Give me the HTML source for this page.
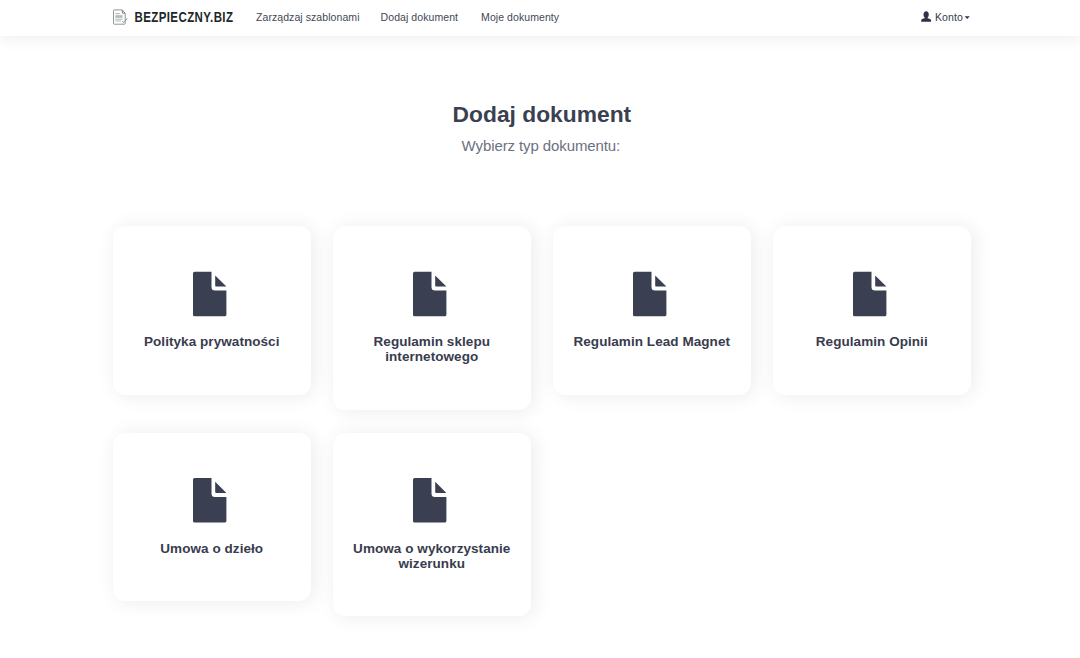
<!DOCTYPE html>
<html><head><meta charset="utf-8">
<style>
*{margin:0;padding:0;box-sizing:border-box}
html,body{width:1080px;height:658px;overflow:hidden;background:#fff;font-family:"Liberation Sans",sans-serif}
.nav{position:absolute;left:0;top:0;width:1080px;height:36px;background:#fff;box-shadow:0 2px 16px rgba(0,0,0,0.08);z-index:2}
.logo-ic{position:absolute;left:108px;top:5px}
.logo-t{position:absolute;left:134.5px;top:6px;font-weight:bold;font-size:11.5px;letter-spacing:0.4px;color:#1e2828;line-height:18px;white-space:nowrap;transform:scaleY(1.2);transform-origin:0 0}
.nl{position:absolute;top:10px;font-size:10.5px;line-height:14px;color:#434756;white-space:nowrap;letter-spacing:0.07px}
.konto{position:absolute;left:935px;top:10px;font-size:10.5px;line-height:14px;color:#363b4e;letter-spacing:0.1px}
h1{position:absolute;left:0;width:1083.8px;top:99.3px;text-align:center;font-size:22.8px;line-height:30px;font-weight:bold;color:#3a3f51}
.sub{position:absolute;left:0;width:1081.8px;top:134.9px;text-align:center;font-size:15px;line-height:22px;letter-spacing:-0.1px;color:#6d717f}
.card{position:absolute;width:197.5px;background:#fff;border-radius:12px;box-shadow:3px 1px 20px rgba(0,0,0,0.08);text-align:center}
.ov{position:absolute;left:0;top:0;z-index:3}
.card .t{position:absolute;left:0;right:0;top:108px;font-weight:bold;font-size:13.5px;line-height:15px;letter-spacing:0.06px;color:#383c4e}
</style></head><body>
<div class="nav">
  <svg class="logo-ic" width="25" height="25" viewBox="108 5 25 25">
    <path d="M113.5 10.6 Q113.5 9.9 114.2 9.9 H122.2 L125.2 13.3 V23.5 Q125.2 24.2 124.5 24.2 H114.2 Q113.5 24.2 113.5 23.5 Z" fill="#fff" stroke="#8b9090" stroke-width="0.95"/>
    <path d="M122.2 9.9 L122.4 13.1 L125.2 13.4" fill="none" stroke="#6f7575" stroke-width="0.9"/>
    <path d="M115.3 13.5 H119.8 M115.3 15.4 H122.5 M115.3 16.5 H122.5 M115.3 17.6 H122.5 M115.3 19.3 H122.5 M115.3 21 H121" stroke="#a3abab" stroke-width="0.8"/>
    <path d="M122.3 21.2 L123.4 22.3 L127.4 18.6" fill="none" stroke="#8a9292" stroke-width="1"/>
  </svg>
  <div class="logo-t">BEZPIECZNY.BIZ</div>
  <div class="nl" style="left:256px">Zarządzaj szablonami</div>
  <div class="nl" style="left:380.6px">Dodaj dokument</div>
  <div class="nl" style="left:481.1px">Moje dokumenty</div>
  
  <div class="konto">Konto</div>
</div>

<h1>Dodaj dokument</h1>
<div class="sub">Wybierz typ dokumentu:</div>

<div class="card" style="left:113px;top:226.3px;height:168.7px">
  <div class="t">Polityka prywatności</div>
</div>
<div class="card" style="left:333px;top:226.3px;height:183.3px">
  <div class="t">Regulamin sklepu<br>internetowego</div>
</div>
<div class="card" style="left:553px;top:226.3px;height:168.7px">
  <div class="t">Regulamin Lead Magnet</div>
</div>
<div class="card" style="left:773px;top:226.3px;height:168.7px">
  <div class="t">Regulamin Opinii</div>
</div>
<div class="card" style="left:113px;top:432.5px;height:168.7px">
  <div class="t">Umowa o dzieło</div>
</div>
<div class="card" style="left:333px;top:432.5px;height:183.3px">
  <div class="t">Umowa o wykorzystanie<br>wizerunku</div>
</div>
<svg class="ov" width="1080" height="658" viewBox="0 0 1080 658">
<defs><path id="fi" d="M1.6 0 H18.5 V15.3 Q18.5 18.8 22 18.8 H33.4 V42.9 Q33.4 44.5 31.8 44.5 H1.6 Q0 44.5 0 42.9 V1.6 Q0 0 1.6 0 Z M22.2 3.7 L33.4 14.8 H23 Q22.2 14.8 22.2 14 Z" fill="#3a3f51"/></defs>
<path d="M926.15 11.2 C927.8 11.2 928.8 12.6 928.8 14.5 C928.8 16 928.2 17.2 927.5 17.8 V18.3 C929.3 18.7 931.1 19.3 931.1 20.4 V21.7 H921.2 V20.4 C921.2 19.3 923 18.7 924.8 18.3 V17.8 C924.1 17.2 923.5 16 923.5 14.5 C923.5 12.6 924.5 11.2 926.15 11.2 Z" fill="#2d3247"/>
<path d="M964.6 16.3 H969.8 L967.2 18.9 Z" fill="#2d3247"/>
<use href="#fi" x="193" y="271.8"/><use href="#fi" x="413" y="271.8"/><use href="#fi" x="633" y="271.8"/><use href="#fi" x="853" y="271.8"/><use href="#fi" x="193" y="478.1"/><use href="#fi" x="413" y="478.1"/>
</svg>
</body></html>
